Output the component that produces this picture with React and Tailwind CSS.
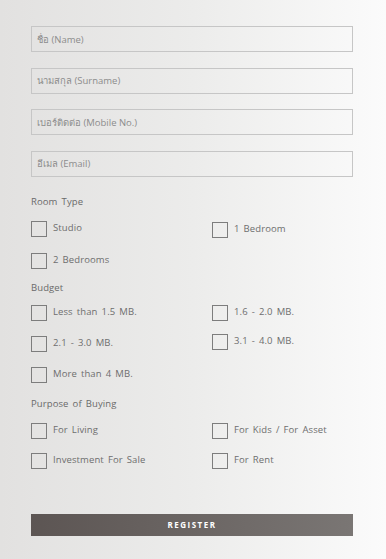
import { useState } from 'react'

const inputs = ['ชื่อ (Name)', 'นามสกุล (Surname)', 'เบอร์ติดต่อ (Mobile No.)', 'อีเมล (Email)']

function Check({ label, className = '' }) {
  const [on, setOn] = useState(false)
  return (
    <label className={`flex items-start gap-[6px] cursor-pointer ${className}`}>
      <span onClick={() => setOn(!on)} className="w-4 h-4 shrink-0 border border-[#7d7d7d] bg-transparent flex items-center justify-center text-[10px] text-[#555]">{on ? '✓' : ''}</span>
      <span className="text-[9.5px] leading-[14px] mt-[0px] text-[#6e6e6e] tracking-[0.1px] [word-spacing:1.5px]">{label}</span>
    </label>
  )
}

function Heading({ children, className = '' }) {
  return <div className={`text-[9.5px] leading-[14px] text-[#6a6a6a] tracking-[0.1px] [word-spacing:1.5px] ${className}`}>{children}</div>
}

export default function App() {
  return (
    <div className="w-[386px] h-[559px] bg-gradient-to-r from-[#e2e1e0] via-[#ececeb] to-[#fbfbfb] font-['Open_Sans','Noto_Sans',sans-serif] overflow-hidden">
      <form className="px-[31px] pt-[26px] w-[384px]" onSubmit={(e) => e.preventDefault()}>
        <div className="flex flex-col gap-[15.5px]">
          {inputs.map((p) => (
            <input key={p} type="text" placeholder={p} className="w-[322px] h-[26px] border border-[#c6c6c6] bg-transparent px-[5px] text-[9.5px] text-[#555] placeholder:text-[#8c8c8c] outline-none" />
          ))}
        </div>

        <Heading className="mt-[18px]">Room Type</Heading>
        <div className="grid grid-cols-[181px_1fr] gap-y-[15px] mt-[12px]">
          <Check label="Studio" />
          <Check label="1 Bedroom" className="mt-[1px]" />
          <Check label="2 Bedrooms" />
        </div>

        <Heading className="mt-[12px]">Budget</Heading>
        <div className="grid grid-cols-[181px_1fr] gap-y-[15px] mt-[10px]">
          <Check label="Less than 1.5 MB." />
          <Check label="1.6 - 2.0 MB." />
          <Check label="2.1 - 3.0 MB." />
          <Check label="3.1 - 4.0 MB." className="-mt-[2px]" />
          <Check label="More than 4 MB." />
        </div>

        <Heading className="mt-[14px]">Purpose of Buying</Heading>
        <div className="grid grid-cols-[181px_1fr] gap-y-[14px] mt-[12px]">
          <Check label="For Living" />
          <Check label="For Kids / For Asset" />
          <Check label="Investment For Sale" />
          <Check label="For Rent" />
        </div>

        <button type="submit" className="mt-[45px] w-[322px] h-[22px] bg-gradient-to-r from-[#5c5553] to-[#7a7674] text-white text-[8px] font-bold tracking-[1.5px] flex items-center justify-center">
          REGISTER
        </button>
      </form>
    </div>
  )
}
